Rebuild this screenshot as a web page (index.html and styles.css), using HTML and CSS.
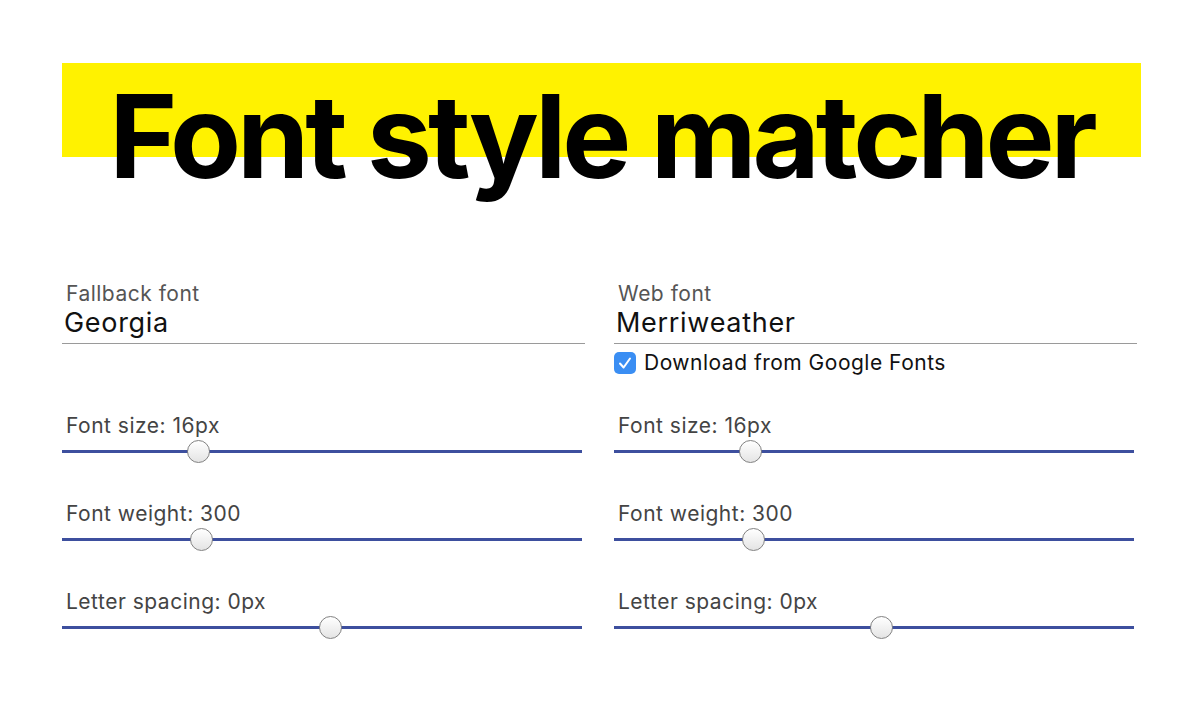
FILE: index.html
```html
<!DOCTYPE html>
<html lang="en">
<head>
<meta charset="utf-8">
<title>Font style matcher</title>
<link rel="stylesheet" href="styles.css">
</head>
<body>
<header class="hero">
  <h1 class="hero-title">Font style matcher</h1>
</header>
<main class="panel">
  <div class="field">
    <label class="field-label" for="fallback">Fallback font</label>
    <input class="field-input" id="fallback" type="text" value="Georgia">
  </div>
  <div class="field">
    <label class="field-label" for="webfont">Web font</label>
    <input class="field-input" id="webfont" type="text" value="Merriweather">
  </div>

  <div class="check-spacer"></div>
  <label class="check-row">
    <span class="check-box">
      <svg viewBox="0 0 22 22" width="22" height="22" aria-hidden="true"><path d="M6 11.5 L9.6 15.5 L16 6.5" fill="none" stroke="#fff" stroke-width="2" stroke-linecap="round" stroke-linejoin="round"/></svg>
    </span>
    <span class="check-text">Download from Google Fonts</span>
  </label>

  <div class="slider-row">
    <div class="slider-label">Font size: 16px</div>
    <input class="slider" type="range" min="0" max="1000" value="252">
  </div>
  <div class="slider-row">
    <div class="slider-label">Font size: 16px</div>
    <input class="slider" type="range" min="0" max="1000" value="252">
  </div>

  <div class="slider-row">
    <div class="slider-label">Font weight: 300</div>
    <input class="slider" type="range" min="0" max="1000" value="258">
  </div>
  <div class="slider-row">
    <div class="slider-label">Font weight: 300</div>
    <input class="slider" type="range" min="0" max="1000" value="258">
  </div>

  <div class="slider-row">
    <div class="slider-label">Letter spacing: 0px</div>
    <input class="slider" type="range" min="0" max="1000" value="518">
  </div>
  <div class="slider-row">
    <div class="slider-label">Letter spacing: 0px</div>
    <input class="slider" type="range" min="0" max="1000" value="516">
  </div>
</main>
</body>
</html>
```

FILE: styles.css
```css
html, body {
  margin: 0;
  padding: 0;
  background: #ffffff;
}

body {
  font-family: Inter, "Noto Sans", "Liberation Sans", sans-serif;
  color: #111;
  width: 1200px;
}

.hero {
  margin: 63px 59px 0 62px;
  background: linear-gradient(#fff200, #fff200) no-repeat;
  background-size: 100% 94px;
}

.hero-title {
  margin: 0;
  font-family: Inter, "Liberation Sans", sans-serif;
  font-weight: 700;
  font-size: 116px;
  line-height: 146px;
  letter-spacing: -0.035em;
  text-align: center;
  color: #000;
}

.panel {
  display: grid;
  grid-template-columns: 523px 523px;
  column-gap: 29px;
  padding: 72px 0 0 62px;
}

.field {
  display: flex;
  flex-direction: column;
  border-bottom: 1px solid #9a9a9a;
}

.field-label {
  font-size: 21px;
  line-height: 25px;
  letter-spacing: 0.5px;
  color: #555;
  padding-left: 4px;
}

.field-input {
  font-family: inherit;
  font-size: 27px;
  line-height: 33px;
  height: 33px;
  letter-spacing: 0.7px;
  color: #111;
  border: 0;
  padding: 0 0 4px 2px;
  margin: 0;
  outline: none;
  background: transparent;
}

.check-spacer {
  height: 1px;
}

.check-row {
  display: flex;
  align-items: center;
  gap: 8px;
  margin-top: 7px;
  height: 23px;
}

.check-box {
  width: 22px;
  height: 22px;
  border-radius: 5px;
  background: #3a8ef3;
  display: flex;
  align-items: center;
  justify-content: center;
}

.check-box svg {
  display: block;
}

.check-text {
  font-size: 21px;
  line-height: 23px;
  letter-spacing: 0.5px;
  color: #111;
}

.slider-row {
  display: flex;
  flex-direction: column;
  gap: 2px;
  margin-top: 38px;
}

.check-spacer + .check-row + .slider-row,
.check-spacer + .check-row + .slider-row + .slider-row {
  margin-top: 39px;
}

.slider-label {
  font-size: 21px;
  line-height: 25px;
  letter-spacing: 0.5px;
  color: #444;
  padding-left: 4px;
}

.slider {
  -webkit-appearance: none;
  appearance: none;
  width: 520px;
  height: 23px;
  margin: 0;
  padding: 0;
  background: transparent;
}

.slider::-webkit-slider-runnable-track {
  height: 3px;
  background: #3d4f9e;
  border: 0;
}

.slider::-webkit-slider-thumb {
  -webkit-appearance: none;
  appearance: none;
  box-sizing: border-box;
  width: 23px;
  height: 23px;
  margin-top: -10px;
  border-radius: 50%;
  border: 1.5px solid #828282;
  background: linear-gradient(#ffffff, #e4e4e4);
}
```
